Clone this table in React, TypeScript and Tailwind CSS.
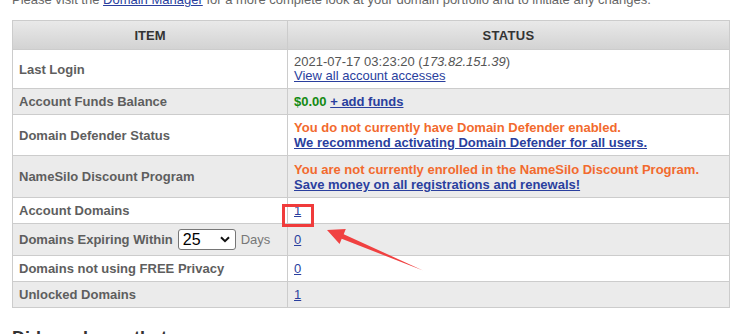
import React from "react";

const link = "text-[#2a3f9e] underline";

function Row({
  label,
  children,
  shaded,
}: {
  label: React.ReactNode;
  children: React.ReactNode;
  shaded?: boolean;
}) {
  return (
    <tr className={shaded ? "bg-[#ebebeb]" : "bg-white"}>
      <td className="border border-[#cccccc] px-[6px] py-[5px] font-bold text-[#5e5e5e] align-middle">
        {label}
      </td>
      <td className="border border-[#cccccc] px-[6px] py-[5px] text-[#555555] align-middle">
        {children}
      </td>
    </tr>
  );
}

export default function App() {
  return (
    <div
      className="relative w-[740px] h-[334px] overflow-hidden bg-white text-[13px] leading-[15px]"
      style={{ fontFamily: '"Liberation Sans", Arial, sans-serif' }}
    >
      <div className="px-[12px] pr-[11px]">
        <p className="mt-[-8px] text-[#666666]">
          Please visit the <a className={link}>Domain Manager</a> for a more complete look at your domain portfolio and to initiate any changes.
        </p>

        <table className="mt-[13px] w-[718px] border-collapse border border-[#cccccc]">
          <colgroup>
            <col className="w-[275px]" />
            <col />
          </colgroup>
          <thead>
            <tr className="bg-gradient-to-b from-[#e9e9e9] to-[#d2d2d2]">
              <th className="border border-[#cccccc] h-[29px] text-center font-bold text-[#333333]">ITEM</th>
              <th className="border border-[#cccccc] h-[29px] text-center font-bold text-[#333333] tracking-[0.3px]">STATUS</th>
            </tr>
          </thead>
          <tbody>
            <Row label="Last Login">
              <div className="leading-[14px]">
                <div>
                  2021-07-17 03:23:20 (<i>173.82.151.39</i>)
                </div>
                <div>
                  <a className={link}>View all account accesses</a>
                </div>
              </div>
            </Row>
            <Row label="Account Funds Balance" shaded>
              <span className="font-bold text-[#138a13]">$0.00</span>{" "}
              <a className={`${link} font-bold`}>+ add funds</a>
            </Row>
            <Row label="Domain Defender Status">
              <div className="font-bold text-[#f26a2e]">You do not currently have Domain Defender enabled.</div>
              <div>
                <a className={`${link} font-bold`}>We recommend activating Domain Defender for all users.</a>
              </div>
            </Row>
            <Row label="NameSilo Discount Program" shaded>
              <div className="py-[0.5px] font-bold text-[#f26a2e]">You are not currently enrolled in the NameSilo Discount Program.</div>
              <div>
                <a className={`${link} font-bold`}>Save money on all registrations and renewals!</a>
              </div>
            </Row>
            <Row label="Account Domains">
              <div className="leading-[14px]">
                <a className={link}>1</a>
              </div>
            </Row>
            <Row
              shaded
              label={
                <div className="flex items-center">
                  <span>Domains Expiring Within</span>
                  <span className="relative ml-[5px] inline-block">
                    <select
                      defaultValue="25"
                      className="block h-[21px] w-[58px] appearance-none rounded-[3px] border border-[#767676] bg-white pl-[4px] text-[16px] font-normal leading-[19px] text-black"
                      style={{ fontFamily: '"Liberation Sans", Arial, sans-serif' }}
                    >
                      <option value="25">25</option>
                      <option value="30">30</option>
                      <option value="60">60</option>
                      <option value="90">90</option>
                    </select>
                    <svg
                      className="pointer-events-none absolute right-[6px] top-[7px]"
                      width="10"
                      height="7"
                      viewBox="0 0 10 7"
                    >
                      <path d="M1 1.2 L5 5.2 L9 1.2" fill="none" stroke="#111" strokeWidth="2" />
                    </svg>
                  </span>
                  <span className="ml-[5px] font-normal text-[#777777]">Days</span>
                </div>
              }
            >
              <a className={link}>0</a>
            </Row>
            <Row label="Domains not using FREE Privacy">
              <a className={link}>0</a>
            </Row>
            <Row label="Unlocked Domains" shaded>
              <a className={link}>1</a>
            </Row>
          </tbody>
        </table>

        <h2 className="mt-[19px] text-[18px] leading-[22px] font-bold text-[#333333]">Did you know that...</h2>
      </div>

      {/* highlight around the domain count, with a pointer */}
      <div className="pointer-events-none absolute left-[282px] top-[204px] h-[23px] w-[32px] border-[3px] border-[#f03b3b]" />
      <svg className="pointer-events-none absolute left-0 top-0" width="740" height="334" viewBox="0 0 740 334">
        <polygon
          points="327,230 345.8,229.1 343.7,234.2 423,270.5 341.7,238.8 339.6,243.9"
          fill="#f04141"
        />
      </svg>
    </div>
  );
}
